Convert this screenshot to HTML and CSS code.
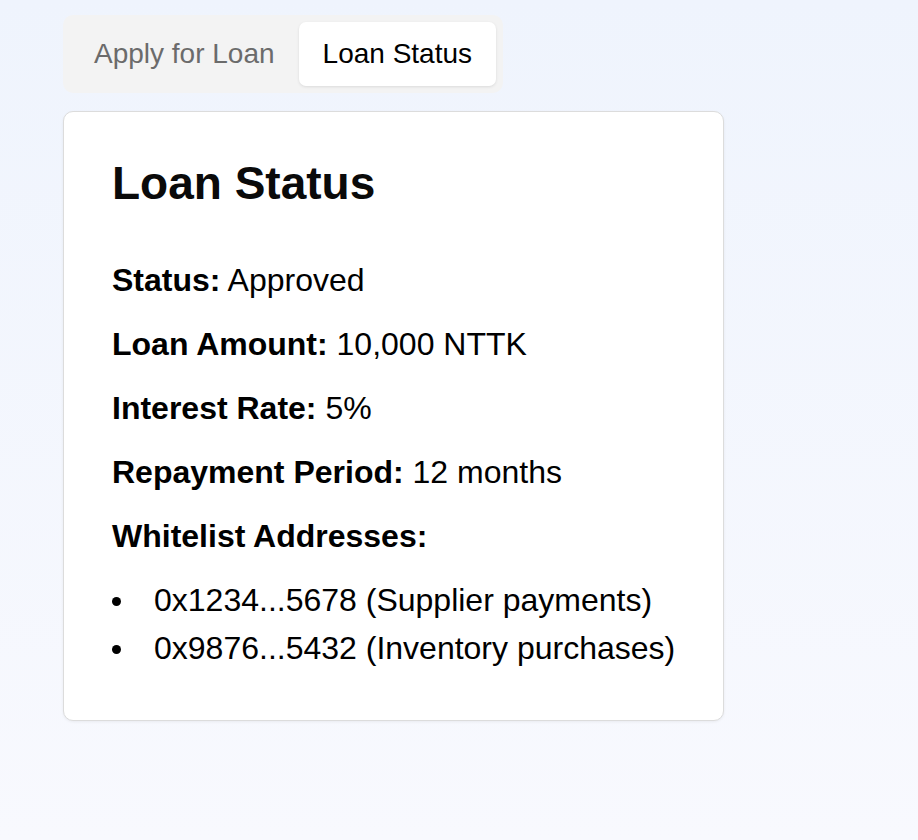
FILE: index.html
```html
<!DOCTYPE html>
<html lang="en">
<head>
<meta charset="utf-8">
<title>Loan Status</title>
<link rel="stylesheet" href="styles.css">
</head>
<body>
<div class="page">
  <div class="tabs">
    <button class="tab">Apply for Loan</button>
    <button class="tab active">Loan Status</button>
  </div>
  <div class="card">
    <h2 class="title">Loan Status</h2>
    <p class="row"><strong>Status:</strong> Approved</p>
    <p class="row"><strong>Loan Amount:</strong> 10,000 NTTK</p>
    <p class="row"><strong>Interest Rate:</strong> 5%</p>
    <p class="row"><strong>Repayment Period:</strong> 12 months</p>
    <p class="row last"><strong>Whitelist Addresses:</strong></p>
    <ul class="list">
      <li>0x1234...5678 (Supplier payments)</li>
      <li>0x9876...5432 (Inventory purchases)</li>
    </ul>
  </div>
</div>
</body>
</html>
```

FILE: styles.css
```css
html, body {
  margin: 0;
  padding: 0;
}
body {
  min-height: 840px;
  background: linear-gradient(180deg, #eff4fd 0%, #f8f9fe 100%);
  font-family: "Liberation Sans", Arial, Helvetica, sans-serif;
  color: #000;
}
.page {
  padding: 15px 0 0 63px;
}
.tabs {
  display: inline-flex;
  padding: 7px;
  background: #f3f3f3;
  border-radius: 10px;
}
.tab {
  font-family: inherit;
  font-size: 28px;
  line-height: 32px;
  padding: 16px 24px;
  border: none;
  background: transparent;
  color: #6b6b6b;
  border-radius: 7px;
  cursor: pointer;
}
.tab.active {
  background: #fff;
  color: #000;
  box-shadow: 0 1px 3px rgba(0,0,0,0.1);
}
.card {
  margin-top: 18px;
  width: 563px;
  padding: 48px;
  background: #fff;
  border: 1px solid #dcdcdc;
  border-radius: 10px;
  box-shadow: 0 1px 3px rgba(0,0,0,0.06);
}
.title {
  margin: 0 0 56px;
  font-size: 46px;
  line-height: 46px;
  font-weight: bold;
  color: #0a0a0a;
}
.row {
  margin: 0 0 28px;
  font-size: 32px;
  line-height: 36px;
}
.row.last {
  margin-bottom: 22px;
}
.list {
  margin: 0;
  padding: 0;
  list-style: none;
  font-size: 32px;
  line-height: 48px;
}
.list li {
  display: flex;
  align-items: center;
  white-space: nowrap;
}
.list li::before {
  content: "";
  width: 9px;
  height: 9px;
  border-radius: 50%;
  background: #000;
  margin: 2px 33px 0 0;
  flex: none;
}
```
